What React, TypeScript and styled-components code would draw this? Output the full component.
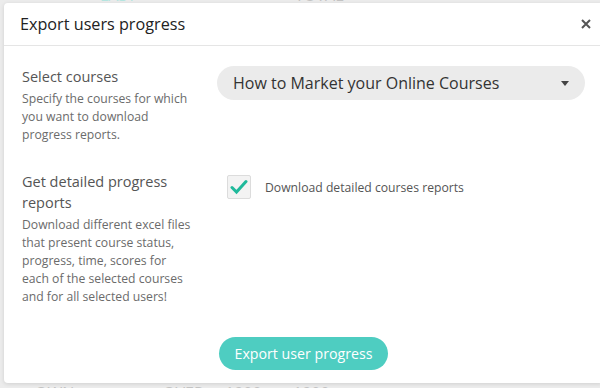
import * as React from 'react';
import styled, { createGlobalStyle } from 'styled-components';

const GlobalStyle = createGlobalStyle`
  html, body {
    margin: 0;
    padding: 0;
    width: 600px;
    height: 388px;
    overflow: hidden;
    font-family: "Open Sans", "Noto Sans", sans-serif;
  }
`;

const Page = styled.div`
  position: relative;
  width: 600px;
  height: 388px;
  background: #ececec;
  overflow: hidden;
  display: flex;
  flex-direction: column;
  justify-content: space-between;
`;

const BackRow = styled.div<{ $top?: boolean }>`
  display: flex;
  font-size: 16px;
  line-height: 16px;
  height: 16px;
  color: #c4c4c4;
  text-transform: uppercase;
  margin-top: ${(p) => (p.$top ? '-13px' : '0')};
  margin-bottom: ${(p) => (p.$top ? '0' : '-13px')};
`;

const BackCell = styled.span<{ $w: number; $teal?: boolean }>`
  width: ${(p) => p.$w}px;
  flex: none;
  color: ${(p) => (p.$teal ? '#b5e6e1' : '#c4c4c4')};
`;

const Modal = styled.div`
  position: absolute;
  left: 4px;
  top: 3px;
  width: 599px;
  height: 380px;
  background: #fff;
  border-radius: 4px;
  box-shadow: 0 1px 4px rgba(0, 0, 0, 0.12);
  display: flex;
  flex-direction: column;
`;

const Header = styled.div`
  height: 42px;
  border-bottom: 1px solid #e5e5e5;
  display: flex;
  align-items: center;
  justify-content: space-between;
  padding: 0 10px 0 16px;
`;

const Title = styled.h2`
  margin: 0;
  font-size: 16.2px;
  font-weight: 400;
  color: #222;
`;

const Close = styled.button`
  border: none;
  background: none;
  padding: 0;
  width: 14px;
  height: 14px;
  display: flex;
  align-items: center;
  justify-content: center;
  cursor: pointer;
`;

const Body = styled.div`
  flex: 1;
  padding: 20px 18px 13px 18px;
  display: flex;
  flex-direction: column;
`;

const Section = styled.div`
  display: grid;
  grid-template-columns: 172px 1fr;
  column-gap: 23px;
  & + & {
    margin-top: 27px;
  }
`;

const Label = styled.div``;

const LabelTitle = styled.div`
  font-size: 14.5px;
  line-height: 21px;
  color: #555;
`;

const LabelText = styled.div`
  margin-top: 3px;
  font-size: 12.2px;
  line-height: 18px;
  color: #6b6b6b;
`;

const Select = styled.div`
  height: 34px;
  border-radius: 17px;
  background: #ebebeb;
  display: flex;
  align-items: center;
  justify-content: space-between;
  padding: 0 16px;
  font-size: 16px;
  color: #333;
`;

const Caret = styled.span`
  width: 0;
  height: 0;
  border-left: 4px solid transparent;
  border-right: 4px solid transparent;
  border-top: 5px solid #444;
`;

const CheckRow = styled.label`
  display: flex;
  align-items: center;
  gap: 14px;
  padding-left: 10px;
  margin-top: 4px;
  height: 24px;
  font-size: 12.2px;
  color: #555;
`;

const Box = styled.span`
  width: 22px;
  height: 22px;
  border: 1px solid #dcdcdc;
  border-radius: 2px;
  background: #f3f3f3;
  display: flex;
  align-items: center;
  justify-content: center;
`;

const Footer = styled.div`
  margin-top: auto;
  display: flex;
  justify-content: center;
`;

const ExportButton = styled.button`
  height: 33px;
  padding: 0 16px;
  border: none;
  border-radius: 17px;
  background: #4ecdc1;
  color: #fff;
  font-family: inherit;
  font-size: 14.2px;
  cursor: pointer;
`;

export default function App() {
  return (
    <Page>
      <GlobalStyle />
      <BackRow $top>
        <BackCell $w={100} />
        <BackCell $w={195} $teal>Last</BackCell>
        <BackCell $w={100}>Total</BackCell>
      </BackRow>
      <BackRow>
        <BackCell $w={35} />
        <BackCell $w={128}>Own</BackCell>
        <BackCell $w={62}>Over</BackCell>
        <BackCell $w={68}>1900</BackCell>
        <BackCell $w={60}>1900</BackCell>
      </BackRow>
      <Modal>
        <Header>
          <Title>Export users progress</Title>
          <Close aria-label="Close">
            <svg width="10" height="10" viewBox="0 0 10 10">
              <path d="M1 1L9 9M9 1L1 9" stroke="#555" strokeWidth="2" />
            </svg>
          </Close>
        </Header>
        <Body>
          <Section>
            <Label>
              <LabelTitle>Select courses</LabelTitle>
              <LabelText>Specify the courses for which you want to download progress reports.</LabelText>
            </Label>
            <Select>
              How to Market your Online Courses
              <Caret />
            </Select>
          </Section>
          <Section>
            <Label>
              <LabelTitle>Get detailed progress reports</LabelTitle>
              <LabelText>
                Download different excel files that present course status, progress, time, scores for each
                of the selected courses and for all selected users!
              </LabelText>
            </Label>
            <div>
              <CheckRow>
                <Box>
                  <svg width="18" height="16" viewBox="0 0 18 16">
                    <path d="M2 8.5L6.5 13L16 2.5" fill="none" stroke="#1fb99b" strokeWidth="3" strokeLinecap="round" />
                  </svg>
                </Box>
                Download detailed courses reports
              </CheckRow>
            </div>
          </Section>
          <Footer>
            <ExportButton>Export user progress</ExportButton>
          </Footer>
        </Body>
      </Modal>
    </Page>
  );
}
